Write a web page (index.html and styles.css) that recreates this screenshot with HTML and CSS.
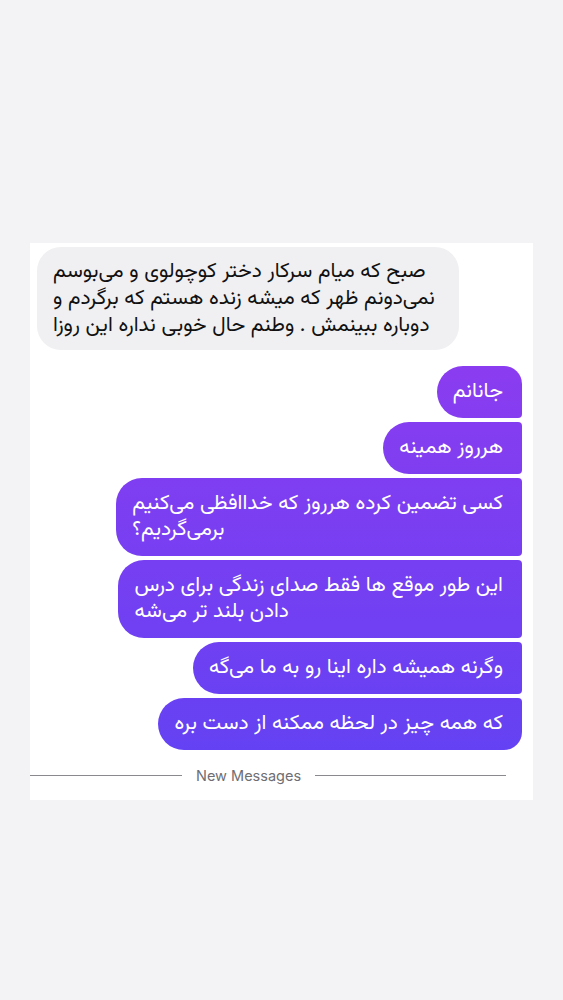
FILE: index.html
```html
<!DOCTYPE html>
<html lang="fa">
<head>
<meta charset="utf-8">
<link rel="stylesheet" href="styles.css">
</head>
<body>
<main class="card">
  <section class="thread">
    <div class="bubble in" dir="rtl">صبح که میام سرکار دختر کوچولوی و می‌بوسم<br>نمی‌دونم ظهر که میشه زنده هستم که برگردم و<br>دوباره ببینمش . وطنم حال خوبی نداره این روزا</div>
    <div class="outgroup">
      <div class="bubble out first" dir="rtl">جانانم</div>
      <div class="bubble out" dir="rtl">هرروز همینه</div>
      <div class="bubble out" dir="rtl">کسی تضمین کرده هرروز که خداافظی می‌کنیم<br>برمی‌گردیم؟</div>
      <div class="bubble out" dir="rtl">این طور موقع ها فقط صدای زندگی برای درس<br>دادن بلند تر می‌شه</div>
      <div class="bubble out" dir="rtl">وگرنه همیشه داره اینا رو به ما می‌گه</div>
      <div class="bubble out last" dir="rtl">که همه چیز در لحظه ممکنه از دست بره</div>
    </div>
  </section>
  <div class="divider">
    <span class="line line-left"></span>
    <span class="label">New Messages</span>
    <span class="line line-right"></span>
  </div>
</main>
</body>
</html>
```

FILE: styles.css
```css
html, body {
  margin: 0;
  padding: 0;
}
body {
  background: #f3f3f6;
  width: 563px;
  height: 1000px;
  overflow: hidden;
}
.card {
  margin: 243px 0 0 30px;
  width: 503px;
  height: 557px;
  background: #ffffff;
  box-sizing: border-box;
  display: flex;
  flex-direction: column;
}
.thread {
  padding: 4px 11px 0 7px;
  display: flex;
  flex-direction: column;
}
.bubble {
  font-family: "Vazirmatn", "Noto Sans Arabic", "DejaVu Sans", sans-serif;
  text-align: left;
  white-space: nowrap;
}
.in {
  align-self: flex-start;
  background: #f0f0f2;
  color: #111111;
  font-size: 21px;
  line-height: 27px;
  padding: 11px 24px 11px 16px;
  border-radius: 24px;
}
.outgroup {
  margin-top: 16px;
  display: flex;
  flex-direction: column;
  align-items: flex-end;
  gap: 4px;
}
.out {
  color: #ffffff;
  font-size: 21px;
  line-height: 26px;
  padding: 13px 19px 13px 16px;
  border-radius: 26px 4px 4px 26px;
  background: linear-gradient(180deg, #8b3cf0 360px, #6342f3 760px) fixed;
}
.out.first {
  border-top-right-radius: 18px;
}
.out.last {
  border-bottom-right-radius: 18px;
}
.divider {
  margin-top: 17px;
  padding-right: 27px;
  display: flex;
  align-items: center;
  gap: 14px;
}
.line {
  height: 1px;
  background: #8a8a8e;
}
.line-left {
  width: 152px;
}
.line-right {
  flex: 1;
}
.label {
  font-family: Inter, "Liberation Sans", sans-serif;
  font-size: 14.5px;
  line-height: 17px;
  color: #6e6e73;
}
```
